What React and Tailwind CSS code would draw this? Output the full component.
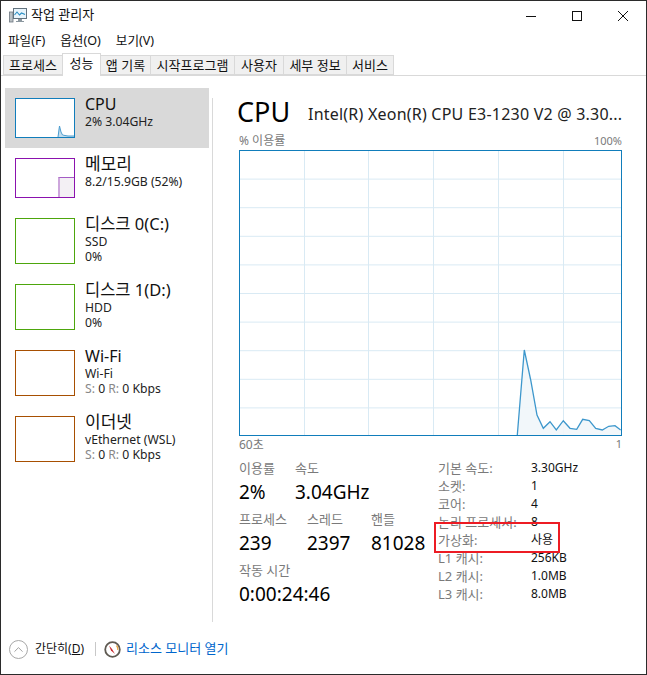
import { ChevronUp } from 'lucide-react';

const FONT = { fontFamily: '"Noto Sans", "Noto Sans CJK KR", sans-serif' };

const tabs = [
  { name: '프로세스', w: 'w-[60px]' },
  { name: '성능', w: 'w-[39px]', active: true },
  { name: '앱 기록', w: 'w-[51px]' },
  { name: '시작프로그램', w: 'w-[85px]' },
  { name: '사용자', w: 'w-[50px]' },
  { name: '세부 정보', w: 'w-[64px]' },
  { name: '서비스', w: 'w-[48px]' },
];

const CHART_POINTS = [
  [278.3, 285], [285.3, 200], [291.7, 230], [298, 265], [304.3, 278.3], [311, 271.7], [317.3, 280],
  [324.3, 270.7], [331, 278.3], [337.7, 279.3], [343.7, 269.3], [350.3, 270.7], [356.7, 278.3],
  [363.3, 280], [369.7, 276.3], [376, 275.7], [381.7, 280],
];

function TitleIcon() {
  return (
    <svg width="18" height="18" viewBox="0 0 18 18">
      <rect x="0.5" y="6" width="3.5" height="10" fill="#b9c0c4" stroke="#6d7780" strokeWidth="0.8" />
      <rect x="4.5" y="2.5" width="13" height="10" fill="#e8f4fb" stroke="#62727e" />
      <path d="M5.5 9 L8 6 L10.5 9 L12.5 7 L16 8.5" fill="none" stroke="#2a8fc4" strokeWidth="1.1" />
      <path d="M9 13 H13 V15 H15 V16 H7 V15 H9 Z" fill="#8b979f" />
    </svg>
  );
}

function WindowButtons() {
  return (
    <div className="flex items-center">
      <svg width="46" height="30" viewBox="0 0 46 30"><path d="M18 15.5 H28" stroke="#111" /></svg>
      <svg width="46" height="30" viewBox="0 0 46 30"><rect x="18.5" y="10.5" width="9" height="9" fill="none" stroke="#111" /></svg>
      <svg width="46" height="30" viewBox="0 0 46 30"><path d="M18 10 L28 20 M28 10 L18 20" stroke="#111" /></svg>
    </div>
  );
}

function SideItem({ color, selected, h, thumbH, title, titleSize = 'text-[16px]', lines, children }) {
  return (
    <div className={`flex ${h} pl-[10px] pt-[10px] ${selected ? 'bg-[#d9d9d9]' : ''}`}>
      <div className={`relative w-[60px] ${thumbH} shrink-0 border bg-white ${color}`}>{children}</div>
      <div className="ml-[10px] flex flex-col">
        <div className={`-mt-[4px] h-[20px] leading-[20px] text-[#111] ${titleSize}`}>{title}</div>
        <div className="flex flex-col text-[12.2px] leading-[15px] text-[#222]">
          {lines.map((line, i) => <div key={i} className="h-[15px]">{line}</div>)}
        </div>
      </div>
    </div>
  );
}

function Kbps() {
  return (
    <span>
      <span className="text-[#888]">S: </span>0 <span className="text-[#888]">R: </span>0 Kbps
    </span>
  );
}

function CpuChart() {
  const line = CHART_POINTS.map(([x, y]) => `${x},${y}`).join(' ');
  return (
    <div className="h-[286px] w-[383px] border border-[#117dbb]">
      <svg width="381" height="284" viewBox="1 1 381 284" className="block">
        {[65, 129, 194, 259, 324].map((x) => (
          <line key={x} x1={x + 0.5} y1="0" x2={x + 0.5} y2="286" stroke="#d9eaf4" />
        ))}
        {[1, 2, 3, 4, 5, 6, 7, 8, 9].map((i) => (
          <line key={i} x1="0" y1={i * 28.6 + 0.5} x2="383" y2={i * 28.6 + 0.5} stroke="#d9eaf4" />
        ))}
        <polygon points={`278.3,285 ${line} 382,285`} fill="#f1f6fa" fillOpacity="0.9" />
        <polyline points={line} fill="none" stroke="#3d97cc" strokeWidth="1.3" />
      </svg>
    </div>
  );
}

function Stat({ label, value, w }) {
  return (
    <div className={w}>
      <div className="h-[18px] text-[13px] leading-[18px] text-[#7a7a7a]">{label}</div>
      <div className="mt-[2px] h-[26px] text-[19px] leading-[26px] text-black">{value}</div>
    </div>
  );
}

const specs = [
  ['기본 속도:', '3.30GHz'],
  ['소켓:', '1'],
  ['코어:', '4'],
  ['논리 프로세서:', '8'],
  ['가상화:', '사용'],
  ['L1 캐시:', '256KB'],
  ['L2 캐시:', '1.0MB'],
  ['L3 캐시:', '8.0MB'],
];

export default function App() {
  return (
    <div style={FONT} className="relative flex h-[675px] w-[647px] flex-col overflow-hidden border border-[#2b2b2b] bg-white">
      <header className="flex h-[30px] items-center justify-between">
        <div className="-mt-[3px] flex items-center pl-[8px]">
          <TitleIcon />
          <span className="ml-[4px] text-[13px] text-[#111]">작업 관리자</span>
        </div>
        <WindowButtons />
      </header>

      <nav className="flex h-[20px] items-center gap-[15px] pl-[7px] text-[12.6px] text-[#111]">
        <span>파일(F)</span>
        <span>옵션(O)</span>
        <span>보기(V)</span>
      </nav>

      <div className="mt-[1px] flex h-[24px] items-end border-b border-[#d9d9d9] pl-[3px] pt-[1px]">
        {tabs.map((tab) => (
          <div
            key={tab.name}
            className={`-ml-[1px] flex items-center justify-center border border-[#d9d9d9] text-[13px] text-[#111] ${tab.w} ${
              tab.active ? 'relative z-10 -mb-[1px] h-[23px] border-b-0 bg-white pb-[2px]' : 'h-[20px] bg-[#f0f0f0] pt-[1px]'
            }`}
          >
            {tab.name}
          </div>
        ))}
      </div>

      <main className="flex flex-1 pt-[12px]">
        <aside className="w-[211px] shrink-0">
          <div className="ml-[4px] w-[204px]">
            <SideItem color="border-[#117dbb]" selected h="h-[60px]" thumbH="h-[40px]" title="CPU" lines={['2% 3.04GHz']}>
              <svg width="58" height="38" viewBox="0 0 58 38" className="absolute inset-0">
                <polygon points="42,38 43,28 45,33 46,36 48,37 58,37 58,38" fill="#c3dded" />
                <polyline points="42,38 43.5,27 45,33 46.5,36 49,36.5 52,37 58,37" fill="none" stroke="#4a9ccf" />
              </svg>
            </SideItem>
            <SideItem color="border-[#8b12ae]" h="h-[60px]" thumbH="h-[40px]" title="메모리" titleSize="text-[17px]" lines={['8.2/15.9GB (52%)']}>
              <div className="absolute bottom-0 right-0 h-[20px] w-[16px] border-t border-l-2 border-t-[#a45cc4] border-l-[#cda6dc] bg-[#f3f0f4]" />
            </SideItem>
            <SideItem color="border-[#4da60c]" h="h-[66px]" thumbH="h-[46px]" title="디스크 0(C:)" titleSize="text-[16.5px]" lines={['SSD', '0%']} />
            <SideItem color="border-[#4da60c]" h="h-[66px]" thumbH="h-[46px]" title="디스크 1(D:)" titleSize="text-[16.5px]" lines={['HDD', '0%']} />
            <SideItem color="border-[#a74f01]" h="h-[66px]" thumbH="h-[46px]" title="Wi-Fi" lines={['Wi-Fi', <Kbps key="k" />]} />
            <SideItem color="border-[#a74f01]" h="h-[66px]" thumbH="h-[46px]" title="이더넷" titleSize="text-[17px]" lines={['vEthernet (WSL)', <Kbps key="k" />]} />
          </div>
        </aside>

        <section className="mt-[10px] h-[524px] flex-1 border-l border-[#d9d9d9] pl-[26px]">
          <div className="flex h-[32px]">
            <h1 className="-ml-[2px] w-[71px] text-[27px] leading-[28px] text-black">CPU</h1>
            <span className="whitespace-nowrap text-[16px] leading-[32px] tracking-[0.22px] text-[#222]">Intel(R) Xeon(R) CPU E3-1230 V2 @ 3.30...</span>
          </div>
          <div className="mt-[2px] flex h-[18px] w-[383px] items-center justify-between text-[#7a7a7a]">
            <span className="text-[12px]">% 이용률</span>
            <span className="text-[11px]">100%</span>
          </div>
          <CpuChart />
          <div className="flex h-[15px] w-[383px] items-center justify-between pt-[2px] text-[#7a7a7a]">
            <span className="text-[12px]">60초</span>
            <span className="text-[11px]">1</span>
          </div>

          <div className="mt-[8px] flex">
            <div className="w-[199px]">
              <div className="flex">
                <Stat label="이용률" value="2%" w="w-[56px]" />
                <Stat label="속도" value="3.04GHz" />
              </div>
              <div className="mt-[5px] flex">
                <Stat label="프로세스" value="239" w="w-[68px]" />
                <Stat label="스레드" value="2397" w="w-[64px]" />
                <Stat label="핸들" value="81028" />
              </div>
              <div className="mt-[5px]">
                <Stat label="작동 시간" value="0:00:24:46" />
              </div>
            </div>
            <div className="flex flex-col text-[13px] leading-[18px]">
              {specs.map(([label, value]) => (
                <div key={label} className="flex">
                  <span className="w-[93px] text-[#7a7a7a]">{label}</span>
                  <span className="text-[12px] text-[#111]">{value}</span>
                </div>
              ))}
            </div>
          </div>
        </section>
      </main>

      <footer className="flex h-[52px] items-center pl-[8px] pt-[2px]">
        <div className="flex h-[19px] w-[19px] items-center justify-center rounded-full border border-[#a8a8a8] text-[#8a8a8a]">
          <ChevronUp size={15} strokeWidth={1.3} />
        </div>
        <span className="ml-[7px] w-[52px] text-[12px] text-[#111]">간단히(<span className="underline">D</span>)</span>
        <div className="ml-[8px] h-[14px] w-px bg-[#c8c8c8]" />
        <svg width="17" height="17" viewBox="0 0 17 17" className="ml-[8px]">
          <circle cx="8.5" cy="8.5" r="7.3" fill="#fff" stroke="#5f5a52" strokeWidth="1.8" />
          <path d="M12.5 4.5 A5.6 5.6 0 0 1 13.8 9" fill="none" stroke="#e8a33d" strokeWidth="1.2" />
          <path d="M5 4.5 L8 8 L11 13 L7 9.5 Z" fill="#c8262c" />
        </svg>
        <span className="ml-[5px] text-[13px] text-[#0066cc]">리소스 모니터 열기</span>
      </footer>

      <div className="absolute left-[433px] top-[521px] h-[31px] w-[126px] border-2 border-[#ed1c24]" />
    </div>
  );
}
